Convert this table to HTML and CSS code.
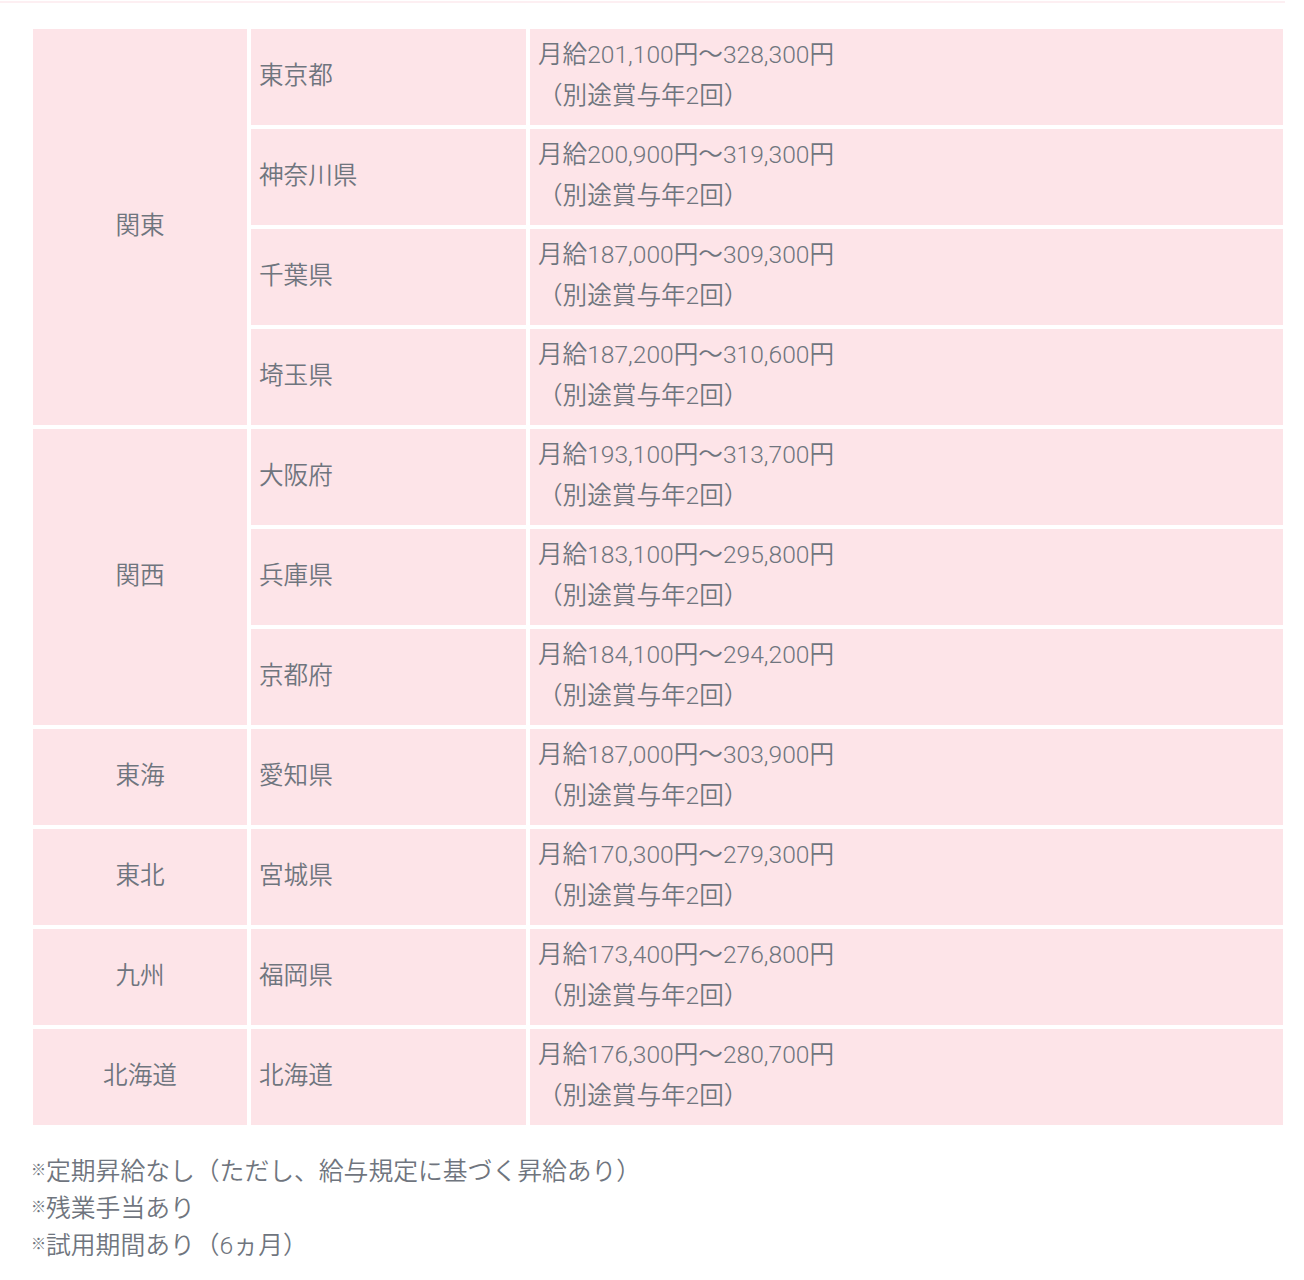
FILE: index.html
```html
<!DOCTYPE html>
<html lang="ja">
<head>
<meta charset="utf-8">
<link rel="stylesheet" href="styles.css">
</head>
<body>
<div class="topline"></div>
<table class="salary">
  <colgroup><col class="c1"><col class="c2"><col class="c3"></colgroup>
  <tbody>
    <tr><td class="area" rowspan="4">関東</td><td class="pref">東京都</td><td class="pay">月給201,100円～328,300円<br><span class="bonus">（別途賞与年2回）</span></td></tr>
    <tr><td class="pref">神奈川県</td><td class="pay">月給200,900円～319,300円<br><span class="bonus">（別途賞与年2回）</span></td></tr>
    <tr><td class="pref">千葉県</td><td class="pay">月給187,000円～309,300円<br><span class="bonus">（別途賞与年2回）</span></td></tr>
    <tr><td class="pref">埼玉県</td><td class="pay">月給187,200円～310,600円<br><span class="bonus">（別途賞与年2回）</span></td></tr>
    <tr><td class="area" rowspan="3">関西</td><td class="pref">大阪府</td><td class="pay">月給193,100円～313,700円<br><span class="bonus">（別途賞与年2回）</span></td></tr>
    <tr><td class="pref">兵庫県</td><td class="pay">月給183,100円～295,800円<br><span class="bonus">（別途賞与年2回）</span></td></tr>
    <tr><td class="pref">京都府</td><td class="pay">月給184,100円～294,200円<br><span class="bonus">（別途賞与年2回）</span></td></tr>
    <tr><td class="area">東海</td><td class="pref">愛知県</td><td class="pay">月給187,000円～303,900円<br><span class="bonus">（別途賞与年2回）</span></td></tr>
    <tr><td class="area">東北</td><td class="pref">宮城県</td><td class="pay">月給170,300円～279,300円<br><span class="bonus">（別途賞与年2回）</span></td></tr>
    <tr><td class="area">九州</td><td class="pref">福岡県</td><td class="pay">月給173,400円～276,800円<br><span class="bonus">（別途賞与年2回）</span></td></tr>
    <tr><td class="area">北海道</td><td class="pref">北海道</td><td class="pay">月給176,300円～280,700円<br><span class="bonus">（別途賞与年2回）</span></td></tr>
  </tbody>
</table>
<div class="notes">
  <p><span class="mark">※</span>定期昇給なし（ただし、給与規定に基づく昇給あり）</p>
  <p><span class="mark">※</span>残業手当あり</p>
  <p><span class="mark">※</span>試用期間あり（6ヵ月）</p>
</div>
</body>
</html>
```
FILE: styles.css
```css
html, body {
  margin: 0;
  padding: 0;
  background: #ffffff;
}
body {
  font-family: Roboto, "Noto Sans CJK JP", sans-serif;
  font-weight: 350;
  color: #6f757e;
  font-size: 24.6px;
}
.topline {
  width: 1285px;
  height: 2px;
  margin-top: 1px;
  background: #fdeff2;
}
.salary {
  margin: 22px 0 0 29px;
  width: 1258px;
  border-collapse: separate;
  border-spacing: 4px;
  table-layout: fixed;
}
.c1 { width: 214px; }
.c2 { width: 275px; }
.c3 { width: 753px; }
.salary td {
  background: #fde4e8;
  padding: 5px 8px 9px;
  height: 82px;
  line-height: 41px;
  vertical-align: middle;
}
.salary td.area {
  text-align: center;
}
.salary td.pay {
  white-space: nowrap;
}
.notes {
  margin: 24px 0 0 31px;
  font-size: 24.8px;
}
.notes p {
  margin: 0;
  line-height: 37px;
  height: 37px;
}
.mark {
  font-family: "Noto Sans CJK JP", sans-serif;
  font-size: 15px;
  line-height: 1;
  vertical-align: 5px;
}
```
